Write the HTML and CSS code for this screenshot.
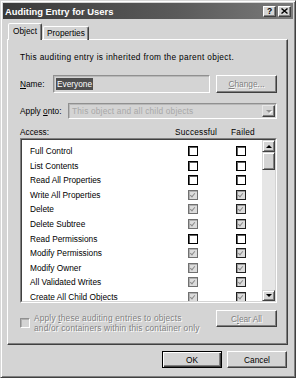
FILE: index.html
```html
<!DOCTYPE html>
<html>
<head>
<meta charset="utf-8">
<link rel="stylesheet" href="styles.css">
</head>
<body>
<div class="dialog">
  <div class="titlebar">
    <span class="title">Auditing Entry for Users</span>
    <span class="tbtns">
      <span class="tbtn help">?</span>
      <span class="tbtn close"><svg width="7" height="6" viewBox="0 0 7 6"><path d="M0.5 0.5 L6.5 5.5 M6.5 0.5 L0.5 5.5" stroke="#000" stroke-width="1.4" fill="none"/></svg></span>
    </span>
  </div>
  <div class="main">
    <div class="tabs">
      <div class="tab active">Object</div>
      <div class="tab">Properties</div>
    </div>
    <div class="panel">
      <p class="info">This auditing entry is inherited from the parent object.</p>
      <div class="name-row">
        <span class="lbl name-lbl"><u>N</u>ame:</span>
        <div class="textbox"><span class="sel">Everyone</span></div>
        <span class="btn disabled change"><span class="emb"><u>C</u>hange...</span></span>
      </div>
      <div class="apply-row">
        <span class="lbl apply-lbl">Apply <u>o</u>nto:</span>
        <div class="combo">
          <span class="combo-text">This object and all child objects</span>
          <span class="combo-btn"><span class="arrow-down dis"></span></span>
        </div>
      </div>
      <div class="access-head">
        <span>Access:</span>
        <span class="colh">Successful</span>
        <span class="colh">Failed</span>
      </div>
      <div class="listbox">
        <div class="listinner">
          <div class="list">
            <div class="lrow"><span>Full Control</span><span class="cell"><span class="cb"></span></span><span class="cell"><span class="cb"></span></span></div>
            <div class="lrow"><span>List Contents</span><span class="cell"><span class="cb"></span></span><span class="cell"><span class="cb"></span></span></div>
            <div class="lrow"><span>Read All Properties</span><span class="cell"><span class="cb"></span></span><span class="cell"><span class="cb"></span></span></div>
            <div class="lrow"><span>Write All Properties</span><span class="cell"><span class="cb chk s"></span></span><span class="cell"><span class="cb chk"></span></span></div>
            <div class="lrow"><span>Delete</span><span class="cell"><span class="cb chk s"></span></span><span class="cell"><span class="cb chk"></span></span></div>
            <div class="lrow"><span>Delete Subtree</span><span class="cell"><span class="cb chk s"></span></span><span class="cell"><span class="cb chk"></span></span></div>
            <div class="lrow"><span>Read Permissions</span><span class="cell"><span class="cb"></span></span><span class="cell"><span class="cb"></span></span></div>
            <div class="lrow"><span>Modify Permissions</span><span class="cell"><span class="cb chk s"></span></span><span class="cell"><span class="cb chk"></span></span></div>
            <div class="lrow"><span>Modify Owner</span><span class="cell"><span class="cb chk s"></span></span><span class="cell"><span class="cb chk"></span></span></div>
            <div class="lrow"><span>All Validated Writes</span><span class="cell"><span class="cb chk s"></span></span><span class="cell"><span class="cb chk"></span></span></div>
            <div class="lrow"><span>Create All Child Objects</span><span class="cell"><span class="cb chk s"></span></span><span class="cell"><span class="cb chk"></span></span></div>
          </div>
          <div class="scrollbar">
            <span class="sbtn"><span class="arrow-up"></span></span>
            <span class="thumb"></span>
            <span class="track"></span>
            <span class="sbtn down"><span class="arrow-down"></span></span>
          </div>
        </div>
      </div>
      <div class="bottom-row">
        <div class="apply-chk">
          <span class="cb dis"></span>
          <span class="emb">Apply <u>t</u>hese auditing entries to objects<br>and/or containers within this container only</span>
        </div>
        <span class="btn disabled clear"><span class="emb">C<u>l</u>ear All</span></span>
      </div>
    </div>
    <div class="footer">
      <span class="btn default">OK</span>
      <span class="btn">Cancel</span>
    </div>
  </div>
</div>
</body>
</html>
```
FILE: styles.css
```css
html, body {
  margin: 0;
  padding: 0;
  background: #d4d4d4;
}
body {
  font-family: "Liberation Sans", Arial, sans-serif;
  font-size: 8.3px;
  color: #000;
}
.dialog {
  width: 296px;
  height: 378px;
  box-sizing: border-box;
  background: #d4d4d4;
  border: 1px solid;
  border-color: #d8d8d8 #404040 #404040 #d8d8d8;
  box-shadow: inset 1px 1px #fff, inset -1px -1px #808080;
  padding: 2px;
}
.titlebar {
  height: 16px;
  display: flex;
  align-items: center;
  justify-content: space-between;
  padding: 0 2px 0 2px;
  background: linear-gradient(to right, #3a3a3a, #5a5a5a 60%, #7a7a7a);
}
.title {
  color: #fff;
  font-weight: bold;
  font-size: 9.4px;
}
.tbtns {
  display: flex;
  gap: 2px;
}
.tbtn {
  width: 13px;
  height: 11px;
  box-sizing: border-box;
  background: #d4d4d4;
  border: 1px solid;
  border-color: #fff #404040 #404040 #fff;
  box-shadow: inset -1px -1px #808080;
  display: flex;
  align-items: center;
  justify-content: center;
  font-weight: bold;
  font-size: 8.5px;
  line-height: 9px;
}
.main {
  padding: 4px 5px 0 4px;
}
.tabs {
  display: flex;
  align-items: flex-end;
  height: 17px;
  margin-bottom: -1px;
  position: relative;
  z-index: 1;
}
.tab {
  height: 14px;
  box-sizing: border-box;
  padding: 0 3px;
  margin-left: 1px;
  border: 1px solid;
  border-bottom: none;
  border-color: #fff #404040 transparent #fff;
  border-radius: 2px 2px 0 0;
  box-shadow: inset -1px 0 #808080;
  line-height: 12px;
}
.tab.active {
  height: 17px;
  padding: 0 4px;
  background: #d4d4d4;
  line-height: 14px;
}
.panel {
  width: 281px;
  height: 306px;
  box-sizing: border-box;
  border: 1px solid;
  border-color: #fff #404040 #404040 #fff;
  box-shadow: inset -1px -1px #808080;
  padding: 12px 10px 0 12px;
}
.info {
  margin: 0;
  line-height: 10px;
  letter-spacing: 0.33px;
}
.name-row {
  margin-top: 13px;
  display: flex;
  align-items: center;
  height: 18px;
}
.lbl {
  line-height: 10px;
}
.name-lbl { width: 33px; }
.apply-lbl { width: 48px; }
.textbox {
  width: 157px;
  height: 18px;
  box-sizing: border-box;
  border: 1px solid;
  border-color: #909090 #fff #fff #909090;
  box-shadow: inset 1px 1px #b8b8b8;
  padding: 2px 0 0 2px;
}
.sel {
  display: inline-block;
  background: #4e4e4e;
  color: #fff;
  line-height: 12px;
  padding: 0 1px;
}
.btn {
  display: inline-flex;
  align-items: center;
  justify-content: center;
  box-sizing: border-box;
  background: #d4d4d4;
  border: 1px solid;
  border-color: #fff #404040 #404040 #fff;
  box-shadow: inset -1px -1px #808080;
  height: 17px;
  width: 60px;
}
.btn.change {
  width: 61px;
  height: 18px;
  margin-left: 6px;
}
.btn.clear {
  width: 61px;
  height: 17px;
}
.btn.default {
  border-color: #000;
  box-shadow: inset 1px 1px #fff, inset -1px -1px #404040, inset -2px -2px #808080;
}
.emb {
  color: #808080;
  text-shadow: 1px 1px #fff;
}
.apply-row {
  margin-top: 10px;
  display: flex;
  align-items: center;
  height: 16px;
}
.combo {
  width: 209px;
  height: 16px;
  box-sizing: border-box;
  border: 1px solid;
  border-color: #909090 #fff #fff #909090;
  box-shadow: inset 1px 1px #b8b8b8;
  display: flex;
  align-items: center;
  justify-content: space-between;
  padding: 1px 1px 1px 3px;
}
.combo-text {
  color: #a8a8a8;
  letter-spacing: 0.2px;
}
.combo-btn {
  width: 13px;
  height: 12px;
  box-sizing: border-box;
  background: #d4d4d4;
  border: 1px solid;
  border-color: #e8e8e8 #404040 #404040 #e8e8e8;
  box-shadow: inset -1px -1px #808080;
  display: flex;
  align-items: center;
  justify-content: center;
}
.arrow-down {
  width: 0;
  height: 0;
  border-left: 3px solid transparent;
  border-right: 3px solid transparent;
  border-top: 3px solid #000;
}
.arrow-down.dis {
  border-top-color: #909090;
  filter: drop-shadow(1px 1px 0 #fff);
}
.arrow-up {
  width: 0;
  height: 0;
  border-left: 3px solid transparent;
  border-right: 3px solid transparent;
  border-bottom: 3px solid #000;
}
.access-head {
  margin-top: 8px;
  display: grid;
  grid-template-columns: 1fr 40px 40px;
  column-gap: 8px;
  padding-right: 14px;
  line-height: 10px;
}
.colh {
  text-align: center;
  white-space: nowrap;
  letter-spacing: 0.2px;
}
.listbox {
  margin-top: 1px;
  height: 165px;
  box-sizing: border-box;
  border: 1px solid;
  border-color: #808080 #fff #fff #808080;
}
.listinner {
  height: 100%;
  box-sizing: border-box;
  border: 1px solid;
  border-color: #404040 #d4d4d4 #d4d4d4 #404040;
  background: #fff;
  display: flex;
  overflow: hidden;
}
.list {
  flex: 1;
  padding: 3.7px 1px 0 8px;
  display: grid;
  grid-auto-rows: 14.6px;
  align-content: start;
}
.lrow {
  display: grid;
  grid-template-columns: 1fr 40px 40px;
  column-gap: 8px;
  align-items: center;
  white-space: nowrap;
}
.cell {
  display: flex;
  justify-content: center;
}
.cb {
  display: inline-block;
  width: 10px;
  height: 10px;
  box-sizing: border-box;
  background: #fff;
  border: 1px solid #000;
  box-shadow: inset 1px 1px #606060;
  position: relative;
}
.cb.chk {
  background: #dcdcdc;
  border-color: #202020;
  box-shadow: inset 1px 1px #9a9a9a;
}
.cb.chk.s {
  border-color: #707070;
  box-shadow: inset 1px 1px #b0b0b0;
}
.cb.chk::after {
  content: "";
  position: absolute;
  left: 2px;
  top: 1px;
  width: 2px;
  height: 4px;
  border: solid #8c8c8c;
  border-width: 0 1.5px 1.5px 0;
  transform: rotate(40deg);
}
.cb.dis {
  background: #d4d4d4;
  border-color: #909090 #fff #fff #909090;
  box-shadow: inset 1px 1px #b0b0b0;
  flex: none;
  margin-top: 5px;
}
.scrollbar {
  width: 13px;
  display: flex;
  flex-direction: column;
  background: #e6e6e6;
}
.sbtn {
  height: 12px;
  box-sizing: border-box;
  background: #d4d4d4;
  border: 1px solid;
  border-color: #d4d4d4 #404040 #404040 #d4d4d4;
  box-shadow: inset 1px 1px #fff, inset -1px -1px #808080;
  display: flex;
  align-items: center;
  justify-content: center;
  flex: none;
}
.sbtn.down {
  height: 11px;
}
.thumb {
  height: 18px;
  box-sizing: border-box;
  background: #d4d4d4;
  border: 1px solid;
  border-color: #d4d4d4 #404040 #404040 #d4d4d4;
  box-shadow: inset 1px 1px #fff, inset -1px -1px #808080;
  flex: none;
}
.track {
  flex: 1;
}
.bottom-row {
  margin-top: 7px;
  display: flex;
  justify-content: space-between;
  align-items: flex-start;
}
.apply-chk {
  display: flex;
  gap: 4px;
  margin-top: 3px;
  line-height: 10px;
  white-space: nowrap;
  letter-spacing: 0.2px;
}
.footer {
  margin-top: 6px;
  display: flex;
  justify-content: flex-end;
  gap: 5px;
  padding-right: 1px;
}
```
